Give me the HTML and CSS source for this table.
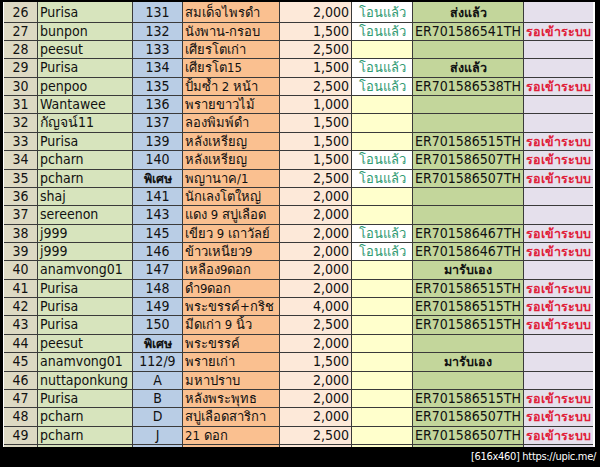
FILE: index.html
```html
<!DOCTYPE html>
<html lang="th">
<head>
<meta charset="utf-8">
<link rel="stylesheet" href="styles.css">
</head>
<body>
<div class="sheet">
  <div class="row first"><div class="no">26</div><div class="name">Purisa</div><div class="id">131</div><div class="item">สมเด็จไพรดำ</div><div class="amt">2,000</div><div class="pay paid">โอนแล้ว</div><div class="track sent">ส่งแล้ว</div><div class="stat"></div></div>
  <div class="row"><div class="no">27</div><div class="name">bunpon</div><div class="id">132</div><div class="item">นังพาน-กรอบ</div><div class="amt">1,500</div><div class="pay paid">โอนแล้ว</div><div class="track">ER701586541TH</div><div class="stat">รอเข้าระบบ</div></div>
  <div class="row"><div class="no">28</div><div class="name">peesut</div><div class="id">133</div><div class="item">เศียรโตเก่า</div><div class="amt">2,500</div><div class="pay"></div><div class="track"></div><div class="stat"></div></div>
  <div class="row"><div class="no">29</div><div class="name">Purisa</div><div class="id">134</div><div class="item">เศียรโต15</div><div class="amt">1,500</div><div class="pay paid">โอนแล้ว</div><div class="track sent">ส่งแล้ว</div><div class="stat"></div></div>
  <div class="row"><div class="no">30</div><div class="name">penpoo</div><div class="id">135</div><div class="item">ปั้มซ้ำ 2 หน้า</div><div class="amt">2,500</div><div class="pay paid">โอนแล้ว</div><div class="track">ER701586538TH</div><div class="stat">รอเข้าระบบ</div></div>
  <div class="row"><div class="no">31</div><div class="name">Wantawee</div><div class="id">136</div><div class="item">พรายขาวไม้</div><div class="amt">1,000</div><div class="pay"></div><div class="track"></div><div class="stat"></div></div>
  <div class="row"><div class="no">32</div><div class="name">กัญจน์11</div><div class="id">137</div><div class="item">ลองพิมพ์ดำ</div><div class="amt">1,500</div><div class="pay"></div><div class="track"></div><div class="stat"></div></div>
  <div class="row"><div class="no">33</div><div class="name">Purisa</div><div class="id">139</div><div class="item">หลังเหรียญ</div><div class="amt">1,500</div><div class="pay"></div><div class="track">ER701586515TH</div><div class="stat">รอเข้าระบบ</div></div>
  <div class="row"><div class="no">34</div><div class="name">pcharn</div><div class="id">140</div><div class="item">หลังเหรียญ</div><div class="amt">1,500</div><div class="pay paid">โอนแล้ว</div><div class="track">ER701586507TH</div><div class="stat">รอเข้าระบบ</div></div>
  <div class="row"><div class="no">35</div><div class="name">pcharn</div><div class="id special">พิเศษ</div><div class="item">พญานาค/1</div><div class="amt">2,500</div><div class="pay paid">โอนแล้ว</div><div class="track">ER701586507TH</div><div class="stat">รอเข้าระบบ</div></div>
  <div class="row"><div class="no">36</div><div class="name">shaj</div><div class="id">141</div><div class="item">นักเลงโตใหญ่</div><div class="amt">2,000</div><div class="pay"></div><div class="track"></div><div class="stat"></div></div>
  <div class="row"><div class="no">37</div><div class="name">sereenon</div><div class="id">143</div><div class="item">แดง 9 สบู่เลือด</div><div class="amt">2,000</div><div class="pay"></div><div class="track"></div><div class="stat"></div></div>
  <div class="row"><div class="no">38</div><div class="name">j999</div><div class="id">145</div><div class="item">เขียว 9 เถาวัลย์</div><div class="amt">2,000</div><div class="pay paid">โอนแล้ว</div><div class="track">ER701586467TH</div><div class="stat">รอเข้าระบบ</div></div>
  <div class="row"><div class="no">39</div><div class="name">j999</div><div class="id">146</div><div class="item">ข้าวเหนียว9</div><div class="amt">2,000</div><div class="pay paid">โอนแล้ว</div><div class="track">ER701586467TH</div><div class="stat">รอเข้าระบบ</div></div>
  <div class="row"><div class="no">40</div><div class="name">anamvong01</div><div class="id">147</div><div class="item">เหลือง9ดอก</div><div class="amt">2,000</div><div class="pay"></div><div class="track sent">มารับเอง</div><div class="stat"></div></div>
  <div class="row"><div class="no">41</div><div class="name">Purisa</div><div class="id">148</div><div class="item">ดำ9ดอก</div><div class="amt">2,000</div><div class="pay"></div><div class="track">ER701586515TH</div><div class="stat">รอเข้าระบบ</div></div>
  <div class="row"><div class="no">42</div><div class="name">Purisa</div><div class="id">149</div><div class="item">พระขรรค์+กริช</div><div class="amt">4,000</div><div class="pay"></div><div class="track">ER701586515TH</div><div class="stat">รอเข้าระบบ</div></div>
  <div class="row"><div class="no">43</div><div class="name">Purisa</div><div class="id">150</div><div class="item">มีดเก่า 9 นิ้ว</div><div class="amt">2,500</div><div class="pay"></div><div class="track">ER701586515TH</div><div class="stat">รอเข้าระบบ</div></div>
  <div class="row"><div class="no">44</div><div class="name">peesut</div><div class="id special">พิเศษ</div><div class="item">พระขรรค์</div><div class="amt">2,000</div><div class="pay"></div><div class="track"></div><div class="stat"></div></div>
  <div class="row"><div class="no">45</div><div class="name">anamvong01</div><div class="id">112/9</div><div class="item">พรายเก่า</div><div class="amt">1,500</div><div class="pay"></div><div class="track sent">มารับเอง</div><div class="stat"></div></div>
  <div class="row"><div class="no">46</div><div class="name">nuttaponkung</div><div class="id">A</div><div class="item">มหาปราบ</div><div class="amt">2,000</div><div class="pay"></div><div class="track"></div><div class="stat"></div></div>
  <div class="row"><div class="no">47</div><div class="name">Purisa</div><div class="id">B</div><div class="item">หลังพระพุทธ</div><div class="amt">2,000</div><div class="pay"></div><div class="track">ER701586515TH</div><div class="stat">รอเข้าระบบ</div></div>
  <div class="row"><div class="no">48</div><div class="name">pcharn</div><div class="id">D</div><div class="item">สบู่เลือดสาริกา</div><div class="amt">2,000</div><div class="pay"></div><div class="track">ER701586507TH</div><div class="stat">รอเข้าระบบ</div></div>
  <div class="row"><div class="no">49</div><div class="name">pcharn</div><div class="id">J</div><div class="item">21 ดอก</div><div class="amt">2,500</div><div class="pay"></div><div class="track">ER701586507TH</div><div class="stat">รอเข้าระบบ</div></div>
  <div class="row tail"><div class="no"></div><div class="name"></div><div class="id"></div><div class="item"></div><div class="amt"></div><div class="pay"></div><div class="track"></div><div class="stat"></div></div>
</div>
<div class="credit">[616x460] https://upic.me/</div>
</body>
</html>
```
FILE: styles.css
```css
html, body {
  margin: 0;
  padding: 0;
  background: #000;
}
body {
  width: 600px;
  height: 467px;
  overflow: hidden;
  font-family: Tahoma, "DejaVu Sans Condensed", "Noto Sans", sans-serif;
  font-size: 14px;
  color: #111;
}
.sheet {
  margin: 2px 5px 0 3px;
  border-left: 1px solid #fff;
  border-right: 2px solid #fff;
  width: 589px;
}
.row {
  display: grid;
  grid-template-columns: 34px 95px 50px 97px 72px 61px 111px 69px;
  height: 18.36px;
  box-sizing: border-box;
  border-bottom: 1px solid #3a3a3a;
}
.row.first {
  height: 20.7px;
}
.row.first > div {
  padding-top: 2px;
}
.row.tail {
  height: 2px;
  border-bottom: none;
}
.row > div {
  box-sizing: border-box;
  border-right: 1px solid #3a3a3a;
  white-space: nowrap;
  overflow: hidden;
  line-height: 17px;
  padding: 0 2px;
}
.row > div:last-child {
  border-right: none;
}
.no { background: #ddd9c3; text-align: center; }
.name { background: #d7e4bd; }
.id { background: #b9cde5; text-align: center; }
.id.special { font-weight: bold; font-size: 12.5px; }
.item { background: #fac090; font-size: 13px; }
.amt { background: #fde9d9; text-align: right; }
.pay { background: #ffffcc; text-align: center; color: #2f9a72; font-size: 13px; }
.pay.paid { background: #ffffff; }
.track { background: #c3d69b; }
.track.sent { text-align: center; font-weight: bold; font-size: 12.5px; }
.stat { background: #e5e0ec; color: #e0203a; font-weight: bold; font-size: 12.5px; padding: 0 1px; }
.credit {
  color: #fff;
  font-family: "DejaVu Sans Condensed", sans-serif;
  font-size: 11px;
  letter-spacing: -0.3px;
  text-align: right;
  padding-right: 4px;
  margin-top: 3px;
}
```
